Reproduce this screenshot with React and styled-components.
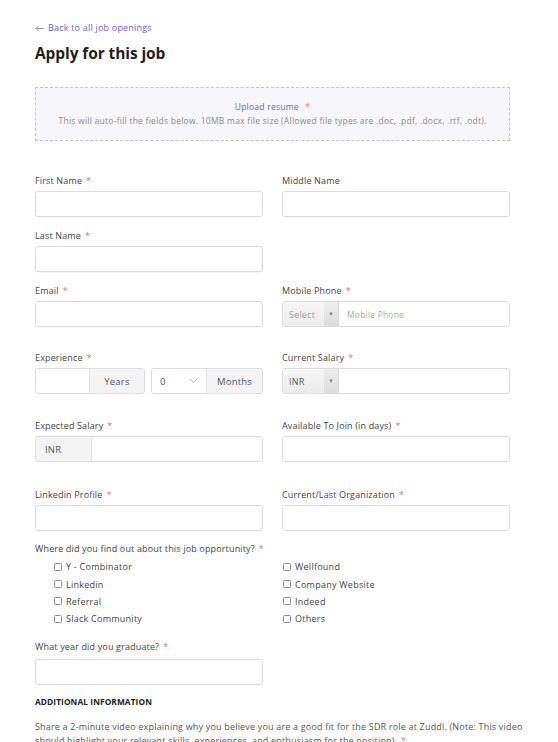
import React from "react";
import styled, { createGlobalStyle } from "styled-components";

const Global = createGlobalStyle`
  html, body { margin: 0; padding: 0; background: #fff; }
  body { font-family: "Open Sans", "Liberation Sans", sans-serif; color: #444; }
  * { box-sizing: border-box; }
`;

const Page = styled.div`
  width: 558px;
  height: 742px;
  overflow: hidden;
  padding: 21px 0 0 35px;
`;

const Wrap = styled.div`
  width: 475px;
`;

const BackLink = styled.a`
  display: flex;
  align-items: center;
  gap: 4px;
  font-size: 9px;
  letter-spacing: 0.2px;
  line-height: 14px;
  color: #6e60d4;
  text-decoration: none;
`;

const Title = styled.h1`
  margin: 7px 0 0;
  font-size: 15.5px;
  line-height: 22px;
  font-weight: 700;
  color: #1f1f1f;
  letter-spacing: -0.1px;
`;

const Upload = styled.div`
  margin-top: 23px;
  height: 54px;
  border: 1px dashed #c4c4d0;
  background: #f7f7fa;
  display: flex;
  flex-direction: column;
  align-items: center;
  justify-content: center;
  font-size: 8.5px;
  letter-spacing: 0.25px;
  line-height: 14px;
  color: #8a8a8a;
`;

const UploadTitle = styled.div`
  color: #6e60d4;
`;

const Req = styled.span`
  color: #e0736d;
  margin-left: 4px;
`;

const Row = styled.div`
  display: grid;
  grid-template-columns: 228px 228px;
  column-gap: 19px;
  margin-top: ${(p) => p.$mt}px;
`;

const Field = styled.div`
  display: flex;
  flex-direction: column;
`;

const Label = styled.label`
  display: block;
  font-size: 9px;
  letter-spacing: 0.15px;
  line-height: 12px;
  height: 12px;
  color: #444;
  white-space: nowrap;
  margin-bottom: ${(p) => (p.$mb ?? 4)}px;
`;

const Input = styled.div`
  height: 26px;
  border: 1px solid #dcdcdc;
  border-radius: 3px;
  background: #fff;
  box-shadow: 0 1px 1px rgba(0, 0, 0, 0.03);
`;

const Group = styled.div`
  height: 26px;
  display: flex;
  border: 1px solid #dcdcdc;
  border-radius: 3px;
  background: #fff;
  overflow: hidden;
  font-size: 9px;
`;

const GroupPair = styled.div`
  display: grid;
  grid-template-columns: 110px 112px;
  column-gap: 6px;
`;

const Addon = styled.div`
  width: ${(p) => p.$w}px;
  flex: 0 0 auto;
  background: #f4f4f4;
  display: flex;
  align-items: center;
  justify-content: ${(p) => (p.$left ? "flex-start" : "center")};
  padding-left: ${(p) => (p.$left ? 9 : 0)}px;
  color: #555;
  font-size: 9.5px;
  letter-spacing: 0.2px;
  border-${(p) => p.$side}: 1px solid #e2e2e2;
`;

const Fill = styled.div`
  flex: 1;
  display: flex;
  align-items: center;
  padding-left: ${(p) => p.$pl ?? 8}px;
  color: ${(p) => p.$color ?? "#555"};
  font-size: ${(p) => p.$fs ?? 9.5}px;
  letter-spacing: 0.2px;
  gap: 4px;
`;

const Chev = styled.span`
  margin-left: auto;
  margin-right: 8px;
  display: flex;
`;

const Select = styled.div`
  width: 56px;
  flex: 0 0 auto;
  display: flex;
  background: linear-gradient(#f7f7f7, #ececec);
  border-right: 1px solid #d8d8d8;
`;

const SelectText = styled.div`
  flex: 1;
  display: flex;
  align-items: center;
  padding-left: 6px;
  color: ${(p) => p.$color};
  font-size: 9px;
  letter-spacing: 0.2px;
`;

const SelectArrow = styled.div`
  width: 14px;
  background: linear-gradient(#eeeeee, #dcdcdc);
  display: flex;
  align-items: center;
  justify-content: center;
  color: #888;
  font-size: 6px;
`;

const Section = styled.div`
  margin-top: ${(p) => p.$mt}px;
`;

const Checks = styled.div`
  display: grid;
  grid-template-columns: 228px 228px;
  column-gap: 19px;
  margin-top: 3px;
`;

const CheckCol = styled.div`
  display: flex;
  flex-direction: column;
  padding-left: ${(p) => p.$pl}px;
`;

const CheckItem = styled.div`
  height: 17.4px;
  display: flex;
  align-items: center;
  gap: 4px;
  font-size: 9px;
  letter-spacing: 0.25px;
  color: #444;
`;

const Box = styled.span`
  width: 8px;
  height: 8px;
  border: 1px solid #8a8a8a;
  border-radius: 1.5px;
  background: #fff;
  flex: 0 0 auto;
`;

const Heading = styled.div`
  margin-top: 11px;
  font-size: 8.3px;
  line-height: 12px;
  font-weight: 700;
  color: #222;
  letter-spacing: 0.1px;
`;

const Para = styled.p`
  margin: 12px 0 0;
  width: 492px;
  font-size: 9px;
  letter-spacing: 0.18px;
  line-height: 14px;
  color: #555;
`;

const Small = styled.div`
  width: 228px;
`;

const ChevronDown = () => (
  <svg width="9" height="6" viewBox="0 0 9 6" fill="none">
    <path d="M1 1l3.5 3.5L8 1" stroke="#b5b5b5" strokeWidth="0.9" />
  </svg>
);

const Arrow = () => (
  <svg width="9" height="7" viewBox="0 0 9 7" fill="none">
    <path d="M8.5 3.5H1M3.5 1L1 3.5 3.5 6" stroke="#777" strokeWidth="0.8" />
  </svg>
);

const L = ({ children, req, mb }) => (
  <Label $mb={mb}>
    {children}
    {req && <Req>*</Req>}
  </Label>
);

export default function App() {
  const left = ["Y - Combinator", "Linkedin", "Referral", "Slack Community"];
  const right = ["Wellfound", "Company Website", "Indeed", "Others"];
  return (
    <>
      <Global />
      <Page>
        <Wrap>
          <BackLink href="#">
            <Arrow />
            Back to all job openings
          </BackLink>
          <Title>Apply for this job</Title>
          <Upload>
            <UploadTitle>
              Upload resume <Req>*</Req>
            </UploadTitle>
            <div>
              This will auto-fill the fields below. 10MB max file size (Allowed file types are .doc, .pdf, .docx, .rtf, .odt).
            </div>
          </Upload>

          <Row $mt={34}>
            <Field>
              <L req>First Name</L>
              <Input />
            </Field>
            <Field>
              <L>Middle Name</L>
              <Input />
            </Field>
          </Row>

          <Row $mt={13}>
            <Field>
              <L req>Last Name</L>
              <Input />
            </Field>
          </Row>

          <Row $mt={13}>
            <Field>
              <L req>Email</L>
              <Input />
            </Field>
            <Field>
              <L req>Mobile Phone</L>
              <Group>
                <Select>
                  <SelectText $color="#9a9a9a">Select</SelectText>
                  <SelectArrow>▼</SelectArrow>
                </Select>
                <Fill $color="#aaa" $fs={8.5}>Mobile Phone</Fill>
              </Group>
            </Field>
          </Row>

          <Row $mt={25}>
            <Field>
              <L req>Experience</L>
              <GroupPair>
                <Group>
                  <Fill />
                  <Addon $w={55} $side="left">Years</Addon>
                </Group>
                <Group>
                  <Fill>
                    0
                    <Chev>
                      <ChevronDown />
                    </Chev>
                  </Fill>
                  <Addon $w={56} $side="left">Months</Addon>
                </Group>
              </GroupPair>
            </Field>
            <Field>
              <L req>Current Salary</L>
              <Group>
                <Select>
                  <SelectText $color="#555">INR</SelectText>
                  <SelectArrow>▼</SelectArrow>
                </Select>
                <Fill />
              </Group>
            </Field>
          </Row>

          <Row $mt={26}>
            <Field>
              <L req>Expected Salary</L>
              <Group>
                <Addon $w={56} $side="right" $left>INR</Addon>
                <Fill />
              </Group>
            </Field>
            <Field>
              <L req>Available To Join (in days)</L>
              <Input />
            </Field>
          </Row>

          <Row $mt={27}>
            <Field>
              <L req>Linkedin Profile</L>
              <Input />
            </Field>
            <Field>
              <L req>Current/Last Organization</L>
              <Input />
            </Field>
          </Row>

          <Section $mt={12}>
            <L req mb={0}>Where did you find out about this job opportunity?</L>
            <Checks>
              <CheckCol $pl={19}>
                {left.map((t) => (
                  <CheckItem key={t}>
                    <Box />
                    {t}
                  </CheckItem>
                ))}
              </CheckCol>
              <CheckCol $pl={1}>
                {right.map((t) => (
                  <CheckItem key={t}>
                    <Box />
                    {t}
                  </CheckItem>
                ))}
              </CheckCol>
            </Checks>
          </Section>

          <Section $mt={13}>
            <Small>
              <Field>
                <L req mb={6}>What year did you graduate?</L>
                <Input />
              </Field>
            </Small>
          </Section>

          <Heading>ADDITIONAL INFORMATION</Heading>
          <Para>
            Share a 2-minute video explaining why you believe you are a good fit for the SDR role at Zuddl. (Note: This video should highlight your relevant skills, experiences, and enthusiasm for the position).
            <Req>*</Req>
          </Para>
        </Wrap>
      </Page>
    </>
  );
}
